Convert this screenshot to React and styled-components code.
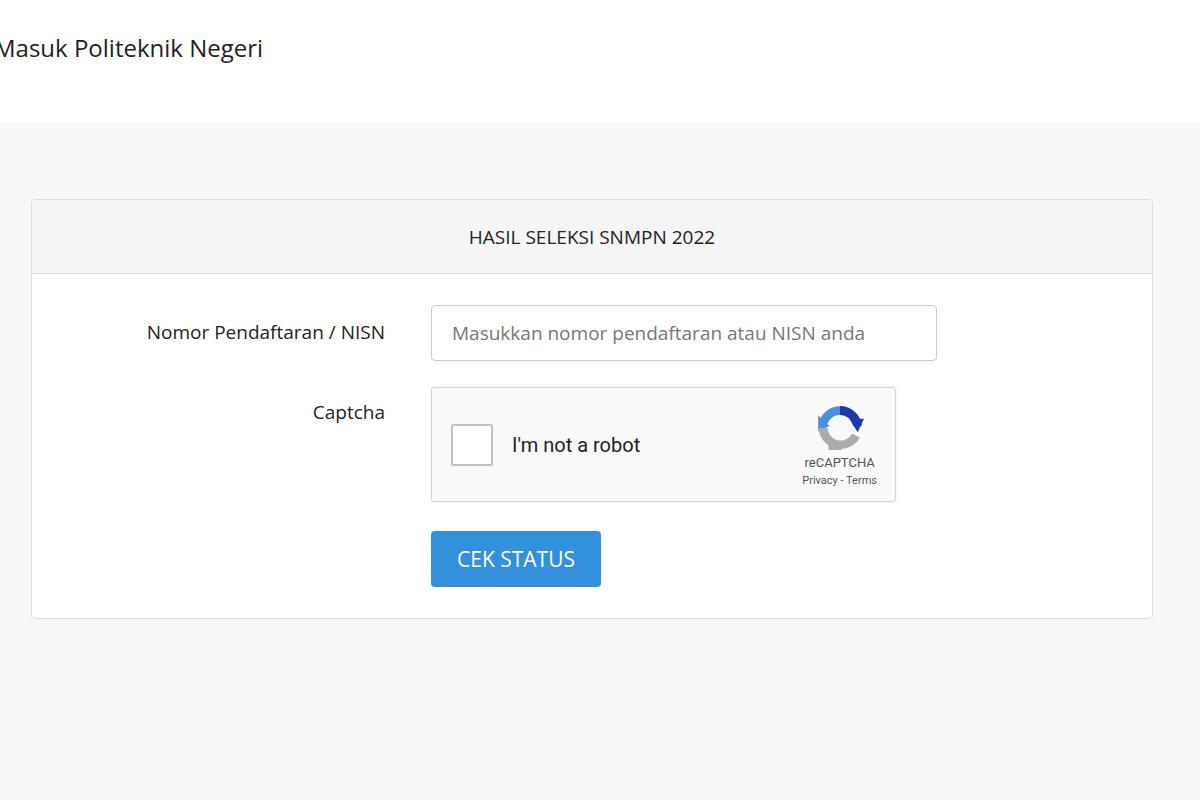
import React from "react";
import styled, { createGlobalStyle } from "styled-components";

const Global = createGlobalStyle`
  body { margin: 0; font-family: "Open Sans", "Noto Sans", sans-serif; background: #f7f8fa; color: #333; }
`;
const Top = styled.header`
  height: 122px; background: #fff; overflow: hidden;
`;
const Brand = styled.div`
  font-size: 24px; margin-left: -6px; padding-top: 31px; color: #222; white-space: nowrap;
`;
const Main = styled.main`
  padding: 77px 47px 180px 31px;
`;
const Card = styled.section`
  background: #fff; border: 1px solid #dcdcdc; border-radius: 4px; overflow: hidden;
`;
const CardHead = styled.div`
  height: 73px; background: #f5f5f5; border-bottom: 1px solid #dcdcdc;
  display: flex; align-items: center; justify-content: center; font-size: 19px; color: #222;
`;
const Body = styled.div`
  padding: 31px 0 31px; display: grid; grid-template-columns: 353px 506px; column-gap: 46px; row-gap: 26px;
`;
const Label = styled.label`
  text-align: right; font-size: 19px; color: #222; padding-top: ${p => p.$pt || 14}px; white-space: nowrap;
`;
const Input = styled.input`
  height: 56px; box-sizing: border-box; border: 1px solid #ccc; border-radius: 4px;
  padding: 0 20px; font: 19px "Open Sans", "Noto Sans", sans-serif; color: #333;
  &::placeholder { color: #777; }
`;
const Captcha = styled.div`
  width: 465px; height: 115px; box-sizing: border-box; background: #f9f9f9; border: 1px solid #d3d3d3;
  border-radius: 3px; box-shadow: 0 0 4px rgba(0,0,0,.08); display: flex; align-items: center; padding: 0 18px 0 19px;
`;
const Box = styled.div`
  width: 38px; height: 38px; border: 2px solid #c1c1c1; border-radius: 2px; background: #fff; margin-right: 19px;
`;
const Robot = styled.span`
  flex: 1; font: 20px Roboto, "Liberation Sans", sans-serif; color: #222;
`;
const Logo = styled.div`
  display: flex; flex-direction: column; align-items: center; font-family: Roboto, "Liberation Sans", sans-serif; color: #555;
  & b { font-weight: 400; font-size: 13px; margin-top: 2px; }
  & small { font-size: 11px; margin-top: 4px; }
`;
const Button = styled.button`
  width: 170px; height: 56px; background: #3390dc; color: #fff; border: 0; border-radius: 4px;
  font: 21px "Open Sans", "Noto Sans", sans-serif; margin-top: 3px;
`;

export default function App() {
  return (
    <>
      <Global />
      <Top><Brand>Masuk Politeknik Negeri</Brand></Top>
      <Main>
        <Card>
          <CardHead>HASIL SELEKSI SNMPN 2022</CardHead>
          <Body>
            <Label>Nomor Pendaftaran / NISN</Label>
            <Input placeholder="Masukkan nomor pendaftaran atau NISN anda" />
            <Label $pt={12}>Captcha</Label>
            <Captcha>
              <Box />
              <Robot>I'm not a robot</Robot>
              <Logo>
                <svg width="50" height="50" viewBox="0 0 48 48">
                  <path d="M24 3 A21 21 0 0 0 3.5 20 L12 20 A12.5 12.5 0 0 1 24 11.5 Z" fill="#4a90e2"/>
                  <path d="M3 12 L3 27 L14 22 Z" fill="#4a90e2"/>
                  <path d="M24 3 A21 21 0 0 1 45 22 L36.5 22 A12.5 12.5 0 0 0 24 11.5 Z" fill="#1c3aa9"/>
                  <path d="M33 15 L47 15 L41 28 Z" fill="#1c3aa9"/>
                  <path d="M3.5 24 A21 21 0 0 0 43 33 L35.5 29.5 A12.5 12.5 0 0 1 12 24 Z" fill="#ababab"/>
                  <path d="M13 32 L26 45 L13 45 Z" fill="#ababab"/>
                </svg>
                <b>reCAPTCHA</b>
                <small>Privacy - Terms</small>
              </Logo>
            </Captcha>
            <div />
            <div><Button>CEK STATUS</Button></div>
          </Body>
        </Card>
      </Main>
    </>
  );
}
